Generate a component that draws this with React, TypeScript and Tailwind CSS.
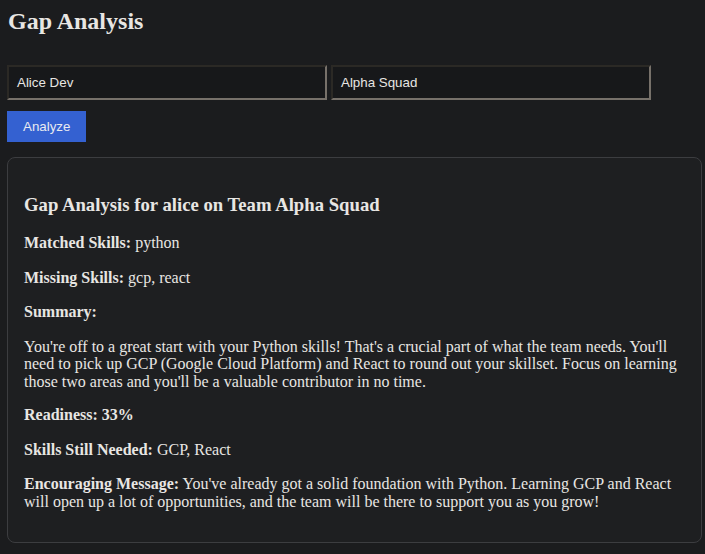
import React from "react";

export default function App() {
  const serif = { fontFamily: '"Liberation Serif", "Times New Roman", serif' };
  const sans = { fontFamily: '"Liberation Sans", Arial, sans-serif' };
  return (
    <div className="min-h-screen bg-[#1b1c1e] text-[#e8e6e3] pl-[7px] pt-[8px]" style={serif}>
      <div className="w-[695px]">
        <h2 className="text-[24px] font-bold leading-[normal] m-0 pl-[1px]">Gap Analysis</h2>
        <div className="flex gap-[4px] mt-[30px]">
          <div
            className="w-[320px] h-[35px] bg-[#17181a] border-2 border-t-[#2b2925] border-l-[#2b2925] border-b-[#77716a] border-r-[#77716a] px-[8px] flex items-center text-[13.33px] leading-[normal] text-[#e8e6e3]"
            style={sans}
          >
            Alice Dev
          </div>
          <div
            className="w-[320px] h-[35px] bg-[#17181a] border-2 border-t-[#2b2925] border-l-[#2b2925] border-b-[#77716a] border-r-[#77716a] px-[8px] flex items-center text-[13.33px] leading-[normal] text-[#e8e6e3]"
            style={sans}
          >
            Alpha Squad
          </div>
        </div>
        <div className="mt-[11px] flex">
          <button
            className="bg-[#3461d1] text-[#e8eaf0] text-[13.33px] px-[16px] h-[31px] w-[79px] leading-none"
            style={sans}
          >
            Analyze
          </button>
        </div>
        <div className="mt-[15px] border border-[#3c3d40] rounded-lg bg-[#1e1f21] px-4 pt-[17px] pb-4 text-[16px] leading-[normal]">
          <h3 className="text-[18.72px] font-bold leading-[normal] mt-[18.72px] mb-[18.72px]">
            Gap Analysis for alice on Team Alpha Squad
          </h3>
          <p className="my-4 leading-[18.4px]">
            <strong>Matched Skills:</strong> python
          </p>
          <p className="my-4 leading-[18.4px]">
            <strong>Missing Skills:</strong> gcp, react
          </p>
          <p className="my-4 leading-[18.4px]">
            <strong>Summary:</strong>
          </p>
          <p className="my-4 leading-[17.6px]">
            You're off to a great start with your Python skills! That's a crucial part of what the team needs. You'll need to pick up GCP (Google Cloud Platform) and React to round out your skillset. Focus on learning those two areas and you'll be a valuable contributor in no time.
          </p>
          <p className="my-4 leading-[18.4px]">
            <strong>Readiness: 33%</strong>
          </p>
          <p className="my-4 leading-[18.4px]">
            <strong>Skills Still Needed:</strong> GCP, React
          </p>
          <p className="my-4 leading-[17.6px]">
            <strong>Encouraging Message:</strong> You've already got a solid foundation with Python. Learning GCP and React will open up a lot of opportunities, and the team will be there to support you as you grow!
          </p>
        </div>
      </div>
    </div>
  );
}
